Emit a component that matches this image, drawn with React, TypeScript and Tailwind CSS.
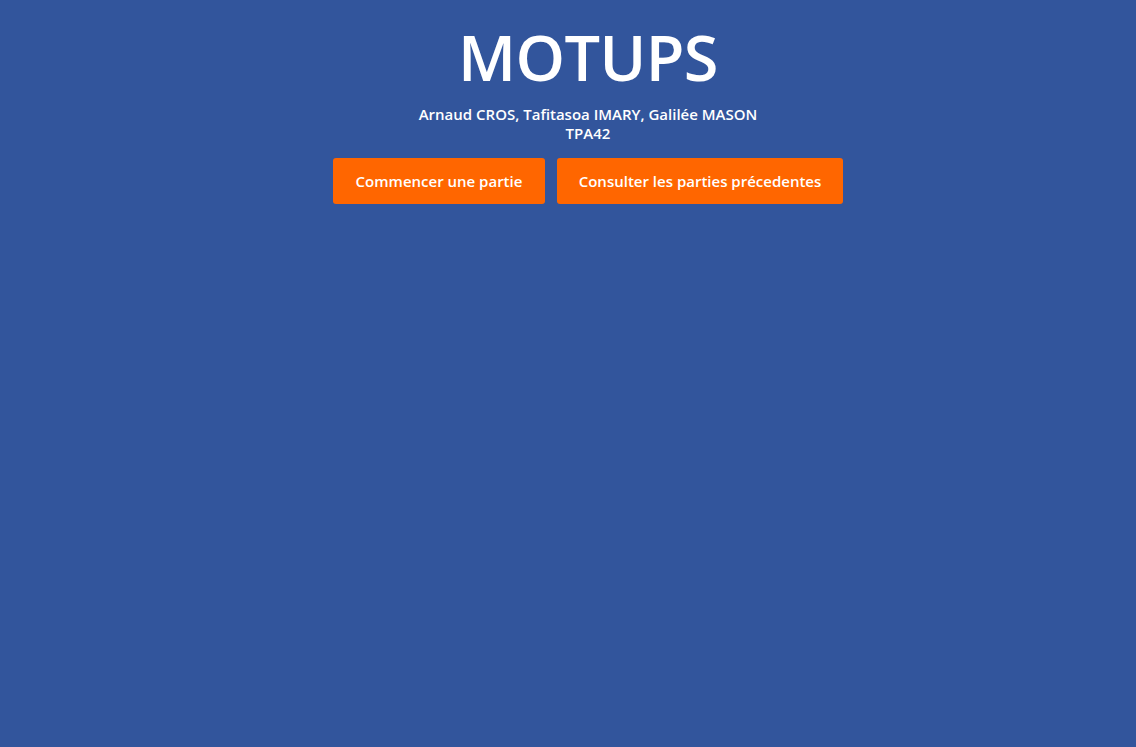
export default function App() {
  return (
    <div
      className="min-h-[747px] w-full bg-[#32559c] text-white flex flex-col items-center pl-[40px]"
      style={{ fontFamily: '"Open Sans", "Noto Sans", sans-serif' }}
    >
      <h1 className="mt-[17px] text-[63px] leading-[80px] font-semibold tracking-[-0.6px]">MOTUPS</h1>
      <p className="mt-[8px] text-[15px] leading-[19px] font-semibold text-center">
        Arnaud CROS, Tafitasoa IMARY, Galilée MASON
        <br />
        TPA42
      </p>
      <div className="mt-[15px] flex gap-[12px]">
        <button className="w-[212px] h-[46px] rounded-[3px] bg-[#ff6600] text-white text-[15px] font-semibold">
          Commencer une partie
        </button>
        <button className="w-[286px] h-[46px] rounded-[3px] bg-[#ff6600] text-white text-[15px] font-semibold">
          Consulter les parties précedentes
        </button>
      </div>
    </div>
  );
}
